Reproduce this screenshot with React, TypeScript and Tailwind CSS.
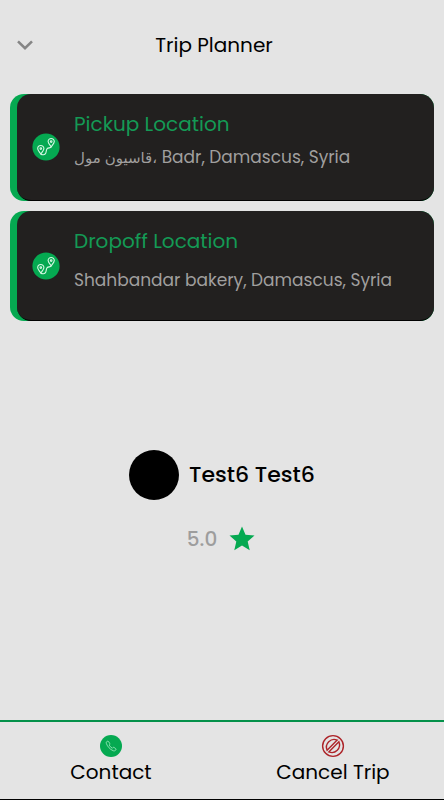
import React from "react";

function RouteIcon() {
  return (
    <svg viewBox="0 0 28 28" className="size-7 shrink-0" aria-hidden="true">
      <circle cx="14" cy="14" r="13.6" fill="#05a951" />
      <g fill="none" stroke="#d5f7e3" strokeWidth="1.1" strokeLinecap="round" strokeLinejoin="round">
        <path d="M8.8 21C6.7 18.4 5.7 17 5.7 15.6a3.100 3.100 0 0 1 6.200 0c0 1.400-1 2.800-3.100 5.400Z" />
        <circle cx="8.8" cy="15.6" r=".8" />
        <path d="M19.2 13.8c-2.100-2.600-3.100-3.600-3.100-5.200a3.100 3.100 0 0 1 6.200 0c0 1.600-1 2.600-3.100 5.200Z" />
        <circle cx="19.2" cy="8.6" r=".8" />
        <path d="M8.8 21c1.600 1.200 4.100.900 4.900-.8.800-1.600.3-3.600 1.600-4.700 1.200-1 3.300-.2 3.900-1.700" />
      </g>
    </svg>
  );
}

type LocationCardProps = {
  title: string;
  address: React.ReactNode;
  layout: string;
  iconHeight: string;
  addressGap: string;
};

function LocationCard({ title, address, layout, iconHeight, addressGap }: LocationCardProps) {
  return (
    <section className="rounded-[14px] bg-[#05a951] pl-[7px]">
      <div className={`flex items-start rounded-[14px] border-b border-black bg-[#22201f] pr-4 pl-[15px] ${layout}`}>
        <div className={`flex items-center ${iconHeight}`}>
          <RouteIcon />
        </div>
        <div className="min-w-0 pl-[14px]">
          <h2 className="text-[20px] leading-7 text-[#149a55]">{title}</h2>
          <p className={`text-[17px] leading-6 text-[#a09f9e] ${addressGap}`}>{address}</p>
        </div>
      </div>
    </section>
  );
}

export default function App() {
  return (
    <div className="flex min-h-screen flex-col border-b border-black bg-[#e4e4e4] font-['Poppins','Inter','Noto_Sans','DejaVu_Sans',sans-serif] text-black">
      <header className="grid grid-cols-[48px_1fr_48px] items-center pt-[25px] pb-[27px]">
        <button type="button" aria-label="Close" className="flex h-10 items-center pl-4">
          <svg viewBox="0 0 18 12" className="h-3 w-[18px]" fill="none" stroke="#858585" strokeWidth="2.6" aria-hidden="true">
            <path d="m2 2.4 7 6.8 7-6.8" />
          </svg>
        </button>
        <h1 className="pr-4 text-center text-[20px] leading-7">Trip Planner</h1>
      </header>

      <div className="flex flex-col gap-[10px] px-[10px] pt-[2px]">
        <LocationCard
          title="Pickup Location"
          address={
            <>
              <span className="text-[15px]">قاسيون مول،</span> Badr, Damascus, Syria
            </>
          }
          layout="h-[107px] pt-4"
          iconHeight="h-[74px]"
          addressGap="mt-[7px]"
        />
        <LocationCard
          title="Dropoff Location"
          address="Shahbandar bakery, Damascus, Syria"
          layout="h-[110px] pt-4"
          iconHeight="h-[78px]"
          addressGap="mt-[13px]"
        />
      </div>

      <main className="flex flex-1 flex-col items-center pt-[129px]">
        <div className="flex items-center gap-[10px]">
          <div className="size-[50px] rounded-full bg-black" />
          <p className="text-[22px] leading-7 font-medium">Test6 Test6</p>
        </div>
        <div className="mt-6 flex items-center gap-[10px]">
          <span className="text-[20px] leading-7 font-medium text-[#9d9d9d]">5.0</span>
          <svg viewBox="0 0 24 24" className="size-[30px]" fill="#05a951" aria-hidden="true">
            <path d="M12 17.27 18.18 21l-1.64-7.03L22 9.24l-7.19-.61L12 2 9.19 8.63 2 9.24l5.46 4.73L5.82 21z" />
          </svg>
        </div>
      </main>

      <nav className="grid grid-cols-2 border-t-2 border-[#04914a]">
        <button type="button" className="flex flex-col items-center pt-3 pb-[13px] text-[20px] leading-7">
          <svg viewBox="0 0 24 24" className="size-6" aria-hidden="true">
            <circle cx="12" cy="12" r="11" fill="#05a951" />
            <path
              d="M8.2 7.3c-.9.5-1.2 1.300-.8 2.300 1.100 3 3.700 5.900 6.700 7.100 1 .4 2 .2 2.700-.7.400-.6.300-1.100-.200-1.500l-1.500-1c-.5-.3-.9-.2-1.300.2l-.500.500c-1.400-.8-2.400-1.800-3.100-3.100l.4-.5c.4-.4.4-.8.1-1.200l-1-1.700c-.4-.6-.9-.7-1.500-.4Z"
              fill="none"
              stroke="#a4edc4"
              strokeWidth=".8"
            />
          </svg>
          Contact
        </button>
        <button type="button" className="flex flex-col items-center pt-3 pb-[13px] text-[20px] leading-7">
          <svg viewBox="0 0 24 24" className="size-6" fill="none" stroke="#ad2429" strokeWidth="1.4" aria-hidden="true">
            <circle cx="12" cy="12" r="10.4" />
            <path d="M6.100 16.200A7.700 7.700 0 0 1 16.200 6.100ZM7.800 17.900A7.700 7.700 0 0 0 17.900 7.800Z" />
          </svg>
          Cancel Trip
        </button>
      </nav>
    </div>
  );
}
